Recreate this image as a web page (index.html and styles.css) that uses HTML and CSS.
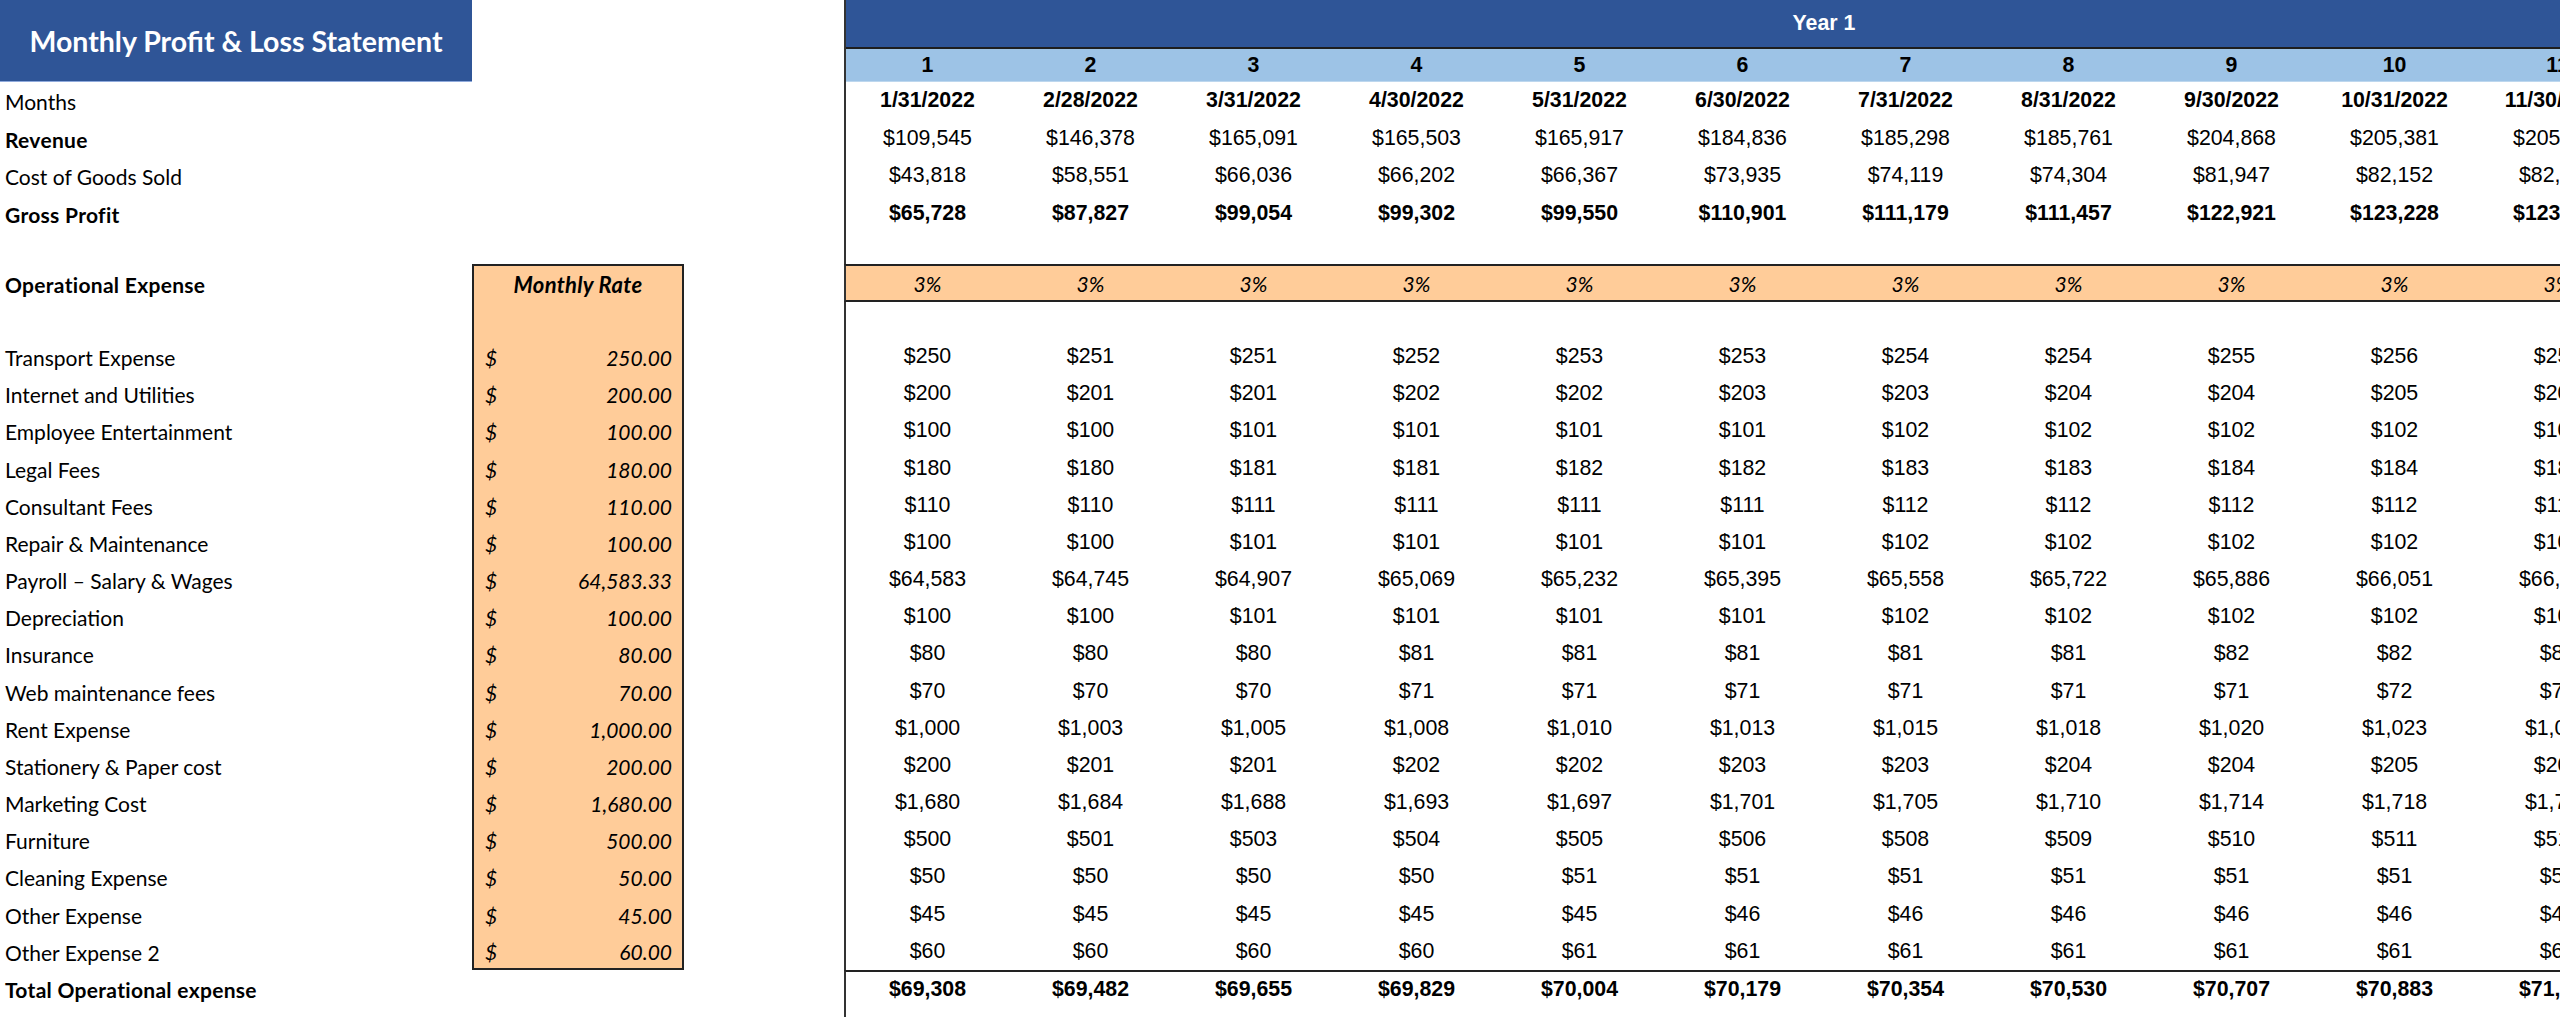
FILE: index.html
```html
<!DOCTYPE html>
<html lang="en">
<head>
<meta charset="utf-8">
<title>Monthly Profit &amp; Loss Statement</title>
<link rel="stylesheet" href="styles.css">
</head>
<body>
<div class="sheet">
  <div class="hdr">
    <div class="title">Monthly Profit &amp; Loss Statement</div>
    <div class="hdr-gap"></div>
    <div class="hdr-right">
      <div class="yearbar">Year 1</div>
      <div class="nums"><span>1</span><span>2</span><span>3</span><span>4</span><span>5</span><span>6</span><span>7</span><span>8</span><span>9</span><span>10</span><span>11</span><span>12</span></div>
    </div>
  </div>

  <div class="row h-top">
    <div class="lbl">Months</div><div class="rate"></div><div class="gap"></div>
    <div class="vals b"><span>1/31/2022</span><span>2/28/2022</span><span>3/31/2022</span><span>4/30/2022</span><span>5/31/2022</span><span>6/30/2022</span><span>7/31/2022</span><span>8/31/2022</span><span>9/30/2022</span><span>10/31/2022</span><span>11/30/2022</span><span>12/31/2022</span></div>
  </div>
  <div class="row h-top">
    <div class="lbl b">Revenue</div><div class="rate"></div><div class="gap"></div>
    <div class="vals"><span>$109,545</span><span>$146,378</span><span>$165,091</span><span>$165,503</span><span>$165,917</span><span>$184,836</span><span>$185,298</span><span>$185,761</span><span>$204,868</span><span>$205,381</span><span>$205,894</span><span></span></div>
  </div>
  <div class="row h-top">
    <div class="lbl">Cost of Goods Sold</div><div class="rate"></div><div class="gap"></div>
    <div class="vals"><span>$43,818</span><span>$58,551</span><span>$66,036</span><span>$66,202</span><span>$66,367</span><span>$73,935</span><span>$74,119</span><span>$74,304</span><span>$81,947</span><span>$82,152</span><span>$82,357</span><span></span></div>
  </div>
  <div class="row h-top">
    <div class="lbl b">Gross Profit</div><div class="rate"></div><div class="gap"></div>
    <div class="vals b"><span>$65,728</span><span>$87,827</span><span>$99,054</span><span>$99,302</span><span>$99,550</span><span>$110,901</span><span>$111,179</span><span>$111,457</span><span>$122,921</span><span>$123,228</span><span>$123,537</span><span></span></div>
  </div>
  <div class="row h-blank1">
    <div class="lbl"></div><div class="rate"></div><div class="gap"></div><div class="vals"></div>
  </div>
  <div class="row h-op">
    <div class="lbl b">Operational Expense</div>
    <div class="rate box first">Monthly Rate</div><div class="gap"></div>
    <div class="vals pct"><span>3%</span><span>3%</span><span>3%</span><span>3%</span><span>3%</span><span>3%</span><span>3%</span><span>3%</span><span>3%</span><span>3%</span><span>3%</span><span>3%</span></div>
  </div>
  <div class="row h-blank2">
    <div class="lbl"></div><div class="rate box"></div><div class="gap"></div><div class="vals"></div>
  </div>

  <div class="row h-x">
    <div class="lbl">Transport Expense</div>
    <div class="rate box"><span>$</span><span>250.00</span></div><div class="gap"></div>
    <div class="vals"><span>$250</span><span>$251</span><span>$251</span><span>$252</span><span>$253</span><span>$253</span><span>$254</span><span>$254</span><span>$255</span><span>$256</span><span>$256</span><span></span></div>
  </div>
  <div class="row h-x">
    <div class="lbl">Internet and Utilities</div>
    <div class="rate box"><span>$</span><span>200.00</span></div><div class="gap"></div>
    <div class="vals"><span>$200</span><span>$201</span><span>$201</span><span>$202</span><span>$202</span><span>$203</span><span>$203</span><span>$204</span><span>$204</span><span>$205</span><span>$205</span><span></span></div>
  </div>
  <div class="row h-x">
    <div class="lbl">Employee Entertainment</div>
    <div class="rate box"><span>$</span><span>100.00</span></div><div class="gap"></div>
    <div class="vals"><span>$100</span><span>$100</span><span>$101</span><span>$101</span><span>$101</span><span>$101</span><span>$102</span><span>$102</span><span>$102</span><span>$102</span><span>$103</span><span></span></div>
  </div>
  <div class="row h-x">
    <div class="lbl">Legal Fees</div>
    <div class="rate box"><span>$</span><span>180.00</span></div><div class="gap"></div>
    <div class="vals"><span>$180</span><span>$180</span><span>$181</span><span>$181</span><span>$182</span><span>$182</span><span>$183</span><span>$183</span><span>$184</span><span>$184</span><span>$185</span><span></span></div>
  </div>
  <div class="row h-x">
    <div class="lbl">Consultant Fees</div>
    <div class="rate box"><span>$</span><span>110.00</span></div><div class="gap"></div>
    <div class="vals"><span>$110</span><span>$110</span><span>$111</span><span>$111</span><span>$111</span><span>$111</span><span>$112</span><span>$112</span><span>$112</span><span>$112</span><span>$113</span><span></span></div>
  </div>
  <div class="row h-x">
    <div class="lbl">Repair &amp; Maintenance</div>
    <div class="rate box"><span>$</span><span>100.00</span></div><div class="gap"></div>
    <div class="vals"><span>$100</span><span>$100</span><span>$101</span><span>$101</span><span>$101</span><span>$101</span><span>$102</span><span>$102</span><span>$102</span><span>$102</span><span>$103</span><span></span></div>
  </div>
  <div class="row h-x">
    <div class="lbl">Payroll – Salary &amp; Wages</div>
    <div class="rate box"><span>$</span><span>64,583.33</span></div><div class="gap"></div>
    <div class="vals"><span>$64,583</span><span>$64,745</span><span>$64,907</span><span>$65,069</span><span>$65,232</span><span>$65,395</span><span>$65,558</span><span>$65,722</span><span>$65,886</span><span>$66,051</span><span>$66,216</span><span></span></div>
  </div>
  <div class="row h-x">
    <div class="lbl">Depreciation</div>
    <div class="rate box"><span>$</span><span>100.00</span></div><div class="gap"></div>
    <div class="vals"><span>$100</span><span>$100</span><span>$101</span><span>$101</span><span>$101</span><span>$101</span><span>$102</span><span>$102</span><span>$102</span><span>$102</span><span>$103</span><span></span></div>
  </div>
  <div class="row h-x">
    <div class="lbl">Insurance</div>
    <div class="rate box"><span>$</span><span>80.00</span></div><div class="gap"></div>
    <div class="vals"><span>$80</span><span>$80</span><span>$80</span><span>$81</span><span>$81</span><span>$81</span><span>$81</span><span>$81</span><span>$82</span><span>$82</span><span>$82</span><span></span></div>
  </div>
  <div class="row h-x">
    <div class="lbl">Web maintenance fees</div>
    <div class="rate box"><span>$</span><span>70.00</span></div><div class="gap"></div>
    <div class="vals"><span>$70</span><span>$70</span><span>$70</span><span>$71</span><span>$71</span><span>$71</span><span>$71</span><span>$71</span><span>$71</span><span>$72</span><span>$72</span><span></span></div>
  </div>
  <div class="row h-x">
    <div class="lbl">Rent Expense</div>
    <div class="rate box"><span>$</span><span>1,000.00</span></div><div class="gap"></div>
    <div class="vals"><span>$1,000</span><span>$1,003</span><span>$1,005</span><span>$1,008</span><span>$1,010</span><span>$1,013</span><span>$1,015</span><span>$1,018</span><span>$1,020</span><span>$1,023</span><span>$1,025</span><span></span></div>
  </div>
  <div class="row h-x">
    <div class="lbl">Stationery &amp; Paper cost</div>
    <div class="rate box"><span>$</span><span>200.00</span></div><div class="gap"></div>
    <div class="vals"><span>$200</span><span>$201</span><span>$201</span><span>$202</span><span>$202</span><span>$203</span><span>$203</span><span>$204</span><span>$204</span><span>$205</span><span>$205</span><span></span></div>
  </div>
  <div class="row h-x">
    <div class="lbl">Marketing Cost</div>
    <div class="rate box"><span>$</span><span>1,680.00</span></div><div class="gap"></div>
    <div class="vals"><span>$1,680</span><span>$1,684</span><span>$1,688</span><span>$1,693</span><span>$1,697</span><span>$1,701</span><span>$1,705</span><span>$1,710</span><span>$1,714</span><span>$1,718</span><span>$1,722</span><span></span></div>
  </div>
  <div class="row h-x">
    <div class="lbl">Furniture</div>
    <div class="rate box"><span>$</span><span>500.00</span></div><div class="gap"></div>
    <div class="vals"><span>$500</span><span>$501</span><span>$503</span><span>$504</span><span>$505</span><span>$506</span><span>$508</span><span>$509</span><span>$510</span><span>$511</span><span>$513</span><span></span></div>
  </div>
  <div class="row h-x">
    <div class="lbl">Cleaning Expense</div>
    <div class="rate box"><span>$</span><span>50.00</span></div><div class="gap"></div>
    <div class="vals"><span>$50</span><span>$50</span><span>$50</span><span>$50</span><span>$51</span><span>$51</span><span>$51</span><span>$51</span><span>$51</span><span>$51</span><span>$51</span><span></span></div>
  </div>
  <div class="row h-x">
    <div class="lbl">Other Expense</div>
    <div class="rate box"><span>$</span><span>45.00</span></div><div class="gap"></div>
    <div class="vals"><span>$45</span><span>$45</span><span>$45</span><span>$45</span><span>$45</span><span>$46</span><span>$46</span><span>$46</span><span>$46</span><span>$46</span><span>$46</span><span></span></div>
  </div>
  <div class="row h-x">
    <div class="lbl">Other Expense 2</div>
    <div class="rate box last"><span>$</span><span>60.00</span></div><div class="gap"></div>
    <div class="vals"><span>$60</span><span>$60</span><span>$60</span><span>$60</span><span>$61</span><span>$61</span><span>$61</span><span>$61</span><span>$61</span><span>$61</span><span>$62</span><span></span></div>
  </div>
  <div class="row h-tot">
    <div class="lbl b">Total Operational expense</div><div class="rate"></div><div class="gap"></div>
    <div class="vals b total"><span>$69,308</span><span>$69,482</span><span>$69,655</span><span>$69,829</span><span>$70,004</span><span>$70,179</span><span>$70,354</span><span>$70,530</span><span>$70,707</span><span>$70,883</span><span>$71,061</span><span></span></div>
  </div>
  <div class="row fill">
    <div class="lbl"></div><div class="rate"></div><div class="gap"></div><div class="vals"></div>
  </div>
</div>
</body>
</html>
```

FILE: styles.css
```css
html, body {
  margin: 0;
  padding: 0;
  background: #ffffff;
  overflow: hidden;
}
body {
  width: 2560px;
  height: 1017px;
}
.sheet {
  width: 2802px;
  height: 1017px;
  display: flex;
  flex-direction: column;
  font-family: Lato, "Open Sans", sans-serif;
  color: #000;
}

/* header */
.hdr {
  flex: none;
  height: 82px;
  display: grid;
  grid-template-columns: 472px 372px 1958px;
}
.title {
  background: #2F5597;
  color: #fff;
  font-weight: 700;
  font-size: 28.5px;
  display: flex;
  align-items: center;
  justify-content: center;
  border-bottom: 1px solid #8faadc;
  padding-top: 1px;
}
.hdr-right {
  border-left: 2px solid #333;
  display: flex;
  flex-direction: column;
}
.yearbar {
  height: 47px;
  flex: none;
  background: #2F5597;
  border-bottom: 2px solid #1e1e1e;
  color: #fff;
  font-family: "Liberation Sans", Arial, sans-serif;
  font-weight: 700;
  font-size: 21.33px;
  display: flex;
  align-items: center;
  justify-content: center;
}
.nums {
  flex: 1;
  background: #9DC3E6;
  border-bottom: 1px solid #bdd7ee;
  display: grid;
  grid-template-columns: repeat(12, 163px);
  align-items: center;
  text-align: center;
  font-family: "Liberation Sans", Arial, sans-serif;
  font-weight: 700;
  font-size: 21.33px;
}

/* body rows */
.row {
  flex: none;
  display: grid;
  grid-template-columns: 472px 212px 160px 1958px;
}
.h-top { height: 37.5px; }
.h-blank1 { height: 32px; }
.h-op { height: 38px; }
.h-blank2 { height: 36px; }
.h-x { height: 37.18px; }
.h-tot { height: 37px; }
.fill { flex: 1; }

.lbl {
  display: flex;
  align-items: center;
  padding: 2px 0 0 5px;
  font-size: 21px;
  white-space: nowrap;
}
.b { font-weight: 700; }
.lbl.b { letter-spacing: 0.3px; }

.rate.box {
  background: #FFCC99;
  border-left: 2px solid #222;
  border-right: 2px solid #222;
  display: flex;
  align-items: center;
  justify-content: space-between;
  padding: 2px 10px 0 11px;
  font-style: italic;
  font-size: 21px;
}
.rate.box.first {
  border-top: 2px solid #222;
  justify-content: center;
  font-weight: 700;
  font-size: 22px;
  letter-spacing: 0.3px;
  padding: 0;
}
.rate.box.last {
  border-bottom: 2px solid #222;
}

.vals {
  border-left: 2px solid #333;
  display: grid;
  grid-template-columns: repeat(12, 163px);
  align-items: center;
  text-align: center;
  font-family: "Liberation Sans", Arial, sans-serif;
  font-size: 21.33px;
  white-space: nowrap;
}
.vals.pct {
  background: #FFCC99;
  border-top: 2px solid #222;
  border-bottom: 2px solid #222;
  font-family: Lato, "Open Sans", sans-serif;
  font-style: italic;
  font-size: 21px;
}
.vals.total {
  border-top: 2px solid #222;
}
```
